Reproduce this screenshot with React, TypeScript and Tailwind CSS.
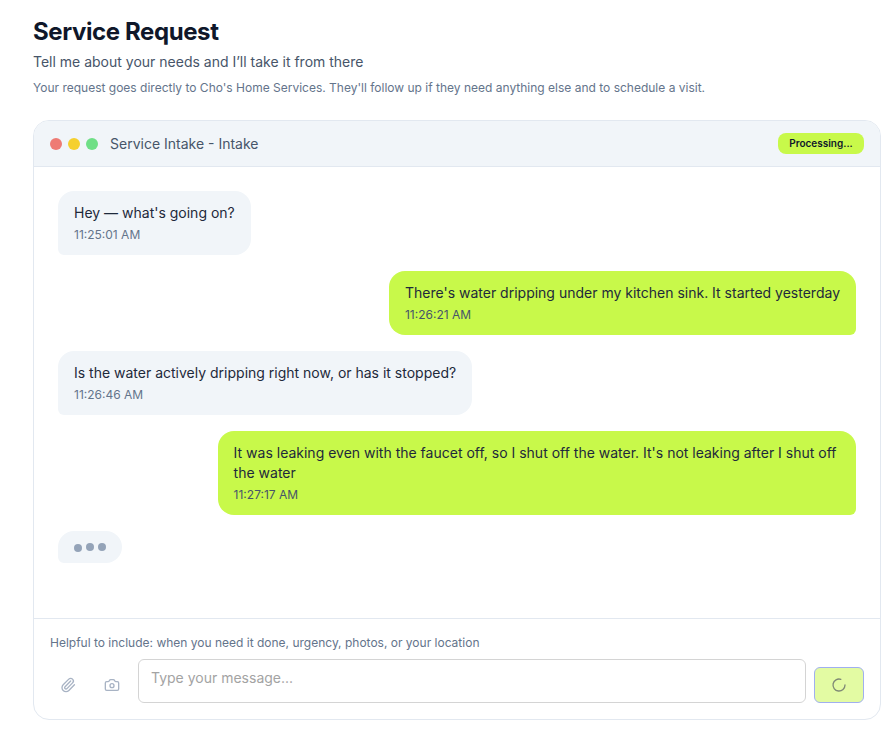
import { Camera, LoaderCircle, Paperclip } from "lucide-react";

function Bubble({ user, text, time }: { user?: boolean; text: string; time: string }) {
  return (
    <div className={user ? "flex justify-end" : "flex justify-start"}>
      <div
        className={
          user
            ? "max-w-[80%] rounded-2xl rounded-br-md bg-[#c8f94a] px-4 py-3 text-[#1e293b]"
            : "max-w-[80%] rounded-2xl rounded-bl-md bg-[#f1f5f9] px-4 py-3 text-[#1e293b]"
        }
      >
        <p className="text-sm leading-5">{text}</p>
        <p className={user ? "mt-1 text-xs leading-4 text-[#475569]" : "mt-1 text-xs leading-4 text-[#64748b]"}>{time}</p>
      </div>
    </div>
  );
}

export default function App() {
  return (
    <div className="min-h-[733px] bg-white pl-[33px] pr-[10px] pt-4 font-['Inter',sans-serif] antialiased">
      <h1 className="text-2xl font-bold leading-8 tracking-[-0.4px] text-[#0f172a]">Service Request</h1>
      <p className="mt-1 text-sm leading-5 text-[#475569]">Tell me about your needs and I’ll take it from there</p>
      <p className="mt-2 text-xs leading-4 text-[#64748b]">
        Your request goes directly to Cho's Home Services. They'll follow up if they need anything else and to schedule a visit.
      </p>

      <div className="mt-6 flex h-[600px] flex-col overflow-hidden rounded-2xl border border-[#e2e8f0] bg-white">
        <div className="flex h-[46px] shrink-0 items-center justify-between border-b border-[#e2e8f0] bg-[#f1f5f9] px-4">
          <div className="flex items-center">
            <div className="flex gap-1.5">
              <span className="h-3 w-3 rounded-full bg-[#ee7b74]" />
              <span className="h-3 w-3 rounded-full bg-[#f5d02e]" />
              <span className="h-3 w-3 rounded-full bg-[#6fdf86]" />
            </div>
            <span className="ml-3 text-sm leading-5 text-[#475569]">Service Intake - Intake</span>
          </div>
          <span className="flex h-[21px] w-[86px] items-center justify-center rounded-lg bg-[#c8f94a] text-[10px] font-semibold text-[#0f172a]">
            Processing...
          </span>
        </div>

        <div className="flex flex-1 flex-col gap-4 p-6">
          <Bubble text="Hey — what's going on?" time="11:25:01 AM" />
          <Bubble user text="There's water dripping under my kitchen sink. It started yesterday" time="11:26:21 AM" />
          <Bubble text="Is the water actively dripping right now, or has it stopped?" time="11:26:46 AM" />
          <Bubble
            user
            text="It was leaking even with the faucet off, so I shut off the water. It's not leaking after I shut off the water"
            time="11:27:17 AM"
          />
          <div className="flex justify-start">
            <div className="flex gap-1 rounded-2xl rounded-bl-md bg-[#f1f5f9] px-4 py-3">
              <span className="h-2 w-2 translate-y-px rounded-full bg-[#94a3b8]" />
              <span className="h-2 w-2 rounded-full bg-[#94a3b8]" />
              <span className="h-2 w-2 rounded-full bg-[#94a3b8]" />
            </div>
          </div>
        </div>

        <div className="shrink-0 border-t border-[#e2e8f0] p-4">
          <p className="mb-2 text-xs leading-4 text-[#64748b]">
            Helpful to include: when you need it done, urgency, photos, or your location
          </p>
          <div className="flex items-end gap-2">
            <button className="flex h-9 w-9 shrink-0 items-center justify-center text-[#a8b3c4]">
              <Paperclip size={16} />
            </button>
            <button className="flex h-9 w-9 shrink-0 items-center justify-center text-[#a8b3c4]">
              <Camera size={16} />
            </button>
            <textarea
              rows={1}
              placeholder="Type your message..."
              className="h-11 flex-1 resize-none rounded-md border border-[#d4d4d4] px-3 py-2 text-sm leading-5 outline-none placeholder:text-[#a3a3a3]"
            />
            <button className="flex h-9 w-[50px] shrink-0 items-center justify-center rounded-md border border-[#a0aff0] bg-[#e3fba3] text-[#808a76]">
              <LoaderCircle size={16} />
            </button>
          </div>
        </div>
      </div>
    </div>
  );
}
